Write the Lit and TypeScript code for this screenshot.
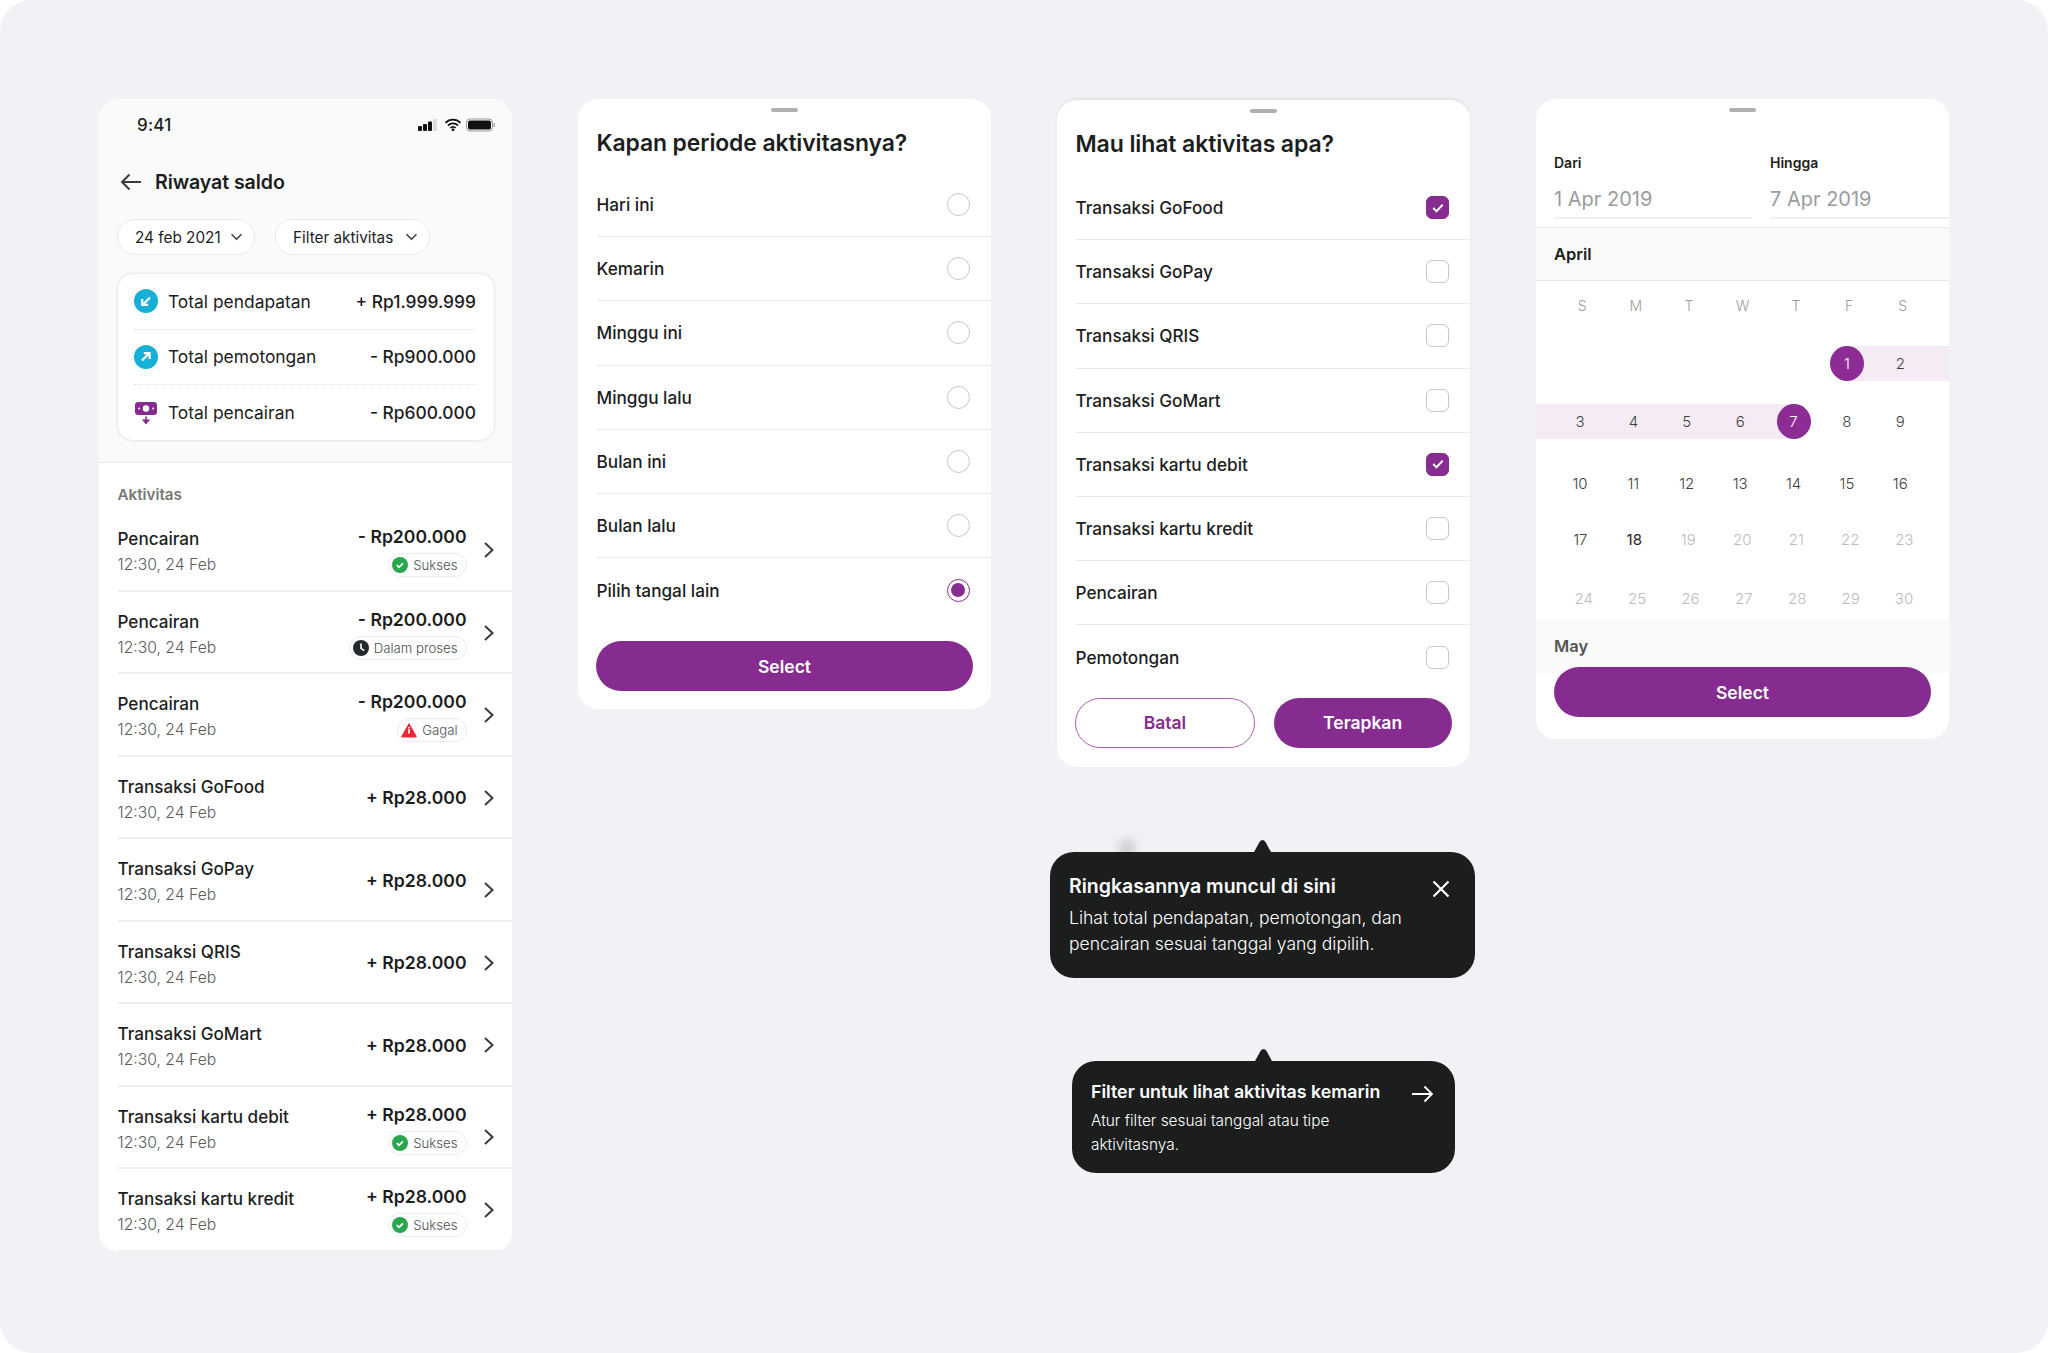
import { LitElement, css, html, svg } from "lit";
import { customElement } from "lit/decorators.js";

const chevron = html`<svg class="chev" width="12" height="18" viewBox="0 0 12 18" fill="none" stroke="#3a3c3c" stroke-width="2"><path d="M2 2l7.5 7L2 16" /></svg>`;
const caret = html`<svg width="13" height="8" viewBox="0 0 13 8" fill="none" stroke="#3a3c3c" stroke-width="1.5"><path d="M1.5 1.2l5 5 5-5" /></svg>`;

const okIcon = svg`<circle cx="8" cy="8" r="8" fill="#2aa64f" /><path d="M4.8 8.2l2.2 2.1 4-4" fill="none" stroke="#fff" stroke-width="1.7" />`;
const clockIcon = svg`<circle cx="8" cy="8" r="8" fill="#25282a" /><path d="M8 3.4v5l3.2 2.2" fill="none" stroke="#fff" stroke-width="1.6" />`;
const failIcon = svg`<path d="M8 .8l7.6 13.4a.8.8 0 0 1-.7 1.2H1.1a.8.8 0 0 1-.7-1.2z" fill="#ee2737" /><rect x="7.2" y="7" width="1.6" height="4.6" fill="#fff" /><rect x="7.2" y="5" width="1.6" height="1.4" fill="#fff" />`;

interface Activity {
  title: string;
  amount: string;
  status?: "ok" | "wait" | "fail";
  low?: boolean;
}

const activities: Activity[] = [
  { title: "Pencairan", amount: "- Rp200.000", status: "ok" },
  { title: "Pencairan", amount: "- Rp200.000", status: "wait" },
  { title: "Pencairan", amount: "- Rp200.000", status: "fail" },
  { title: "Transaksi GoFood", amount: "+ Rp28.000" },
  { title: "Transaksi GoPay", amount: "+ Rp28.000", low: true },
  { title: "Transaksi QRIS", amount: "+ Rp28.000" },
  { title: "Transaksi GoMart", amount: "+ Rp28.000" },
  { title: "Transaksi kartu debit", amount: "+ Rp28.000", status: "ok", low: true },
  { title: "Transaksi kartu kredit", amount: "+ Rp28.000", status: "ok" },
];

const statusInfo = {
  ok: { label: "Sukses", icon: okIcon },
  wait: { label: "Dalam proses", icon: clockIcon },
  fail: { label: "Gagal", icon: failIcon },
};

const periods = ["Hari ini", "Kemarin", "Minggu ini", "Minggu lalu", "Bulan ini", "Bulan lalu", "Pilih tangal lain"];

const activityTypes = [
  { label: "Transaksi GoFood", on: true },
  { label: "Transaksi GoPay", on: false },
  { label: "Transaksi QRIS", on: false },
  { label: "Transaksi GoMart", on: false },
  { label: "Transaksi kartu debit", on: true },
  { label: "Transaksi kartu kredit", on: false },
  { label: "Pencairan", on: false },
  { label: "Pemotongan", on: false },
];

@customElement("app-root")
export class AppRoot extends LitElement {
  static styles = css`
    :host {
      display: block;
      background: #fff;
      font-family: Inter, "Liberation Sans", sans-serif;
      color: #1c1e1e;
    }
    .page {
      box-sizing: border-box;
      height: 1353px;
      padding: 99px;
      background: #f0f2f6;
      border-radius: 32px;
      display: grid;
      grid-template-columns: repeat(4, 413px);
      column-gap: 66px;
      align-items: start;
    }
    .card {
      background: #fff;
      border-radius: 20px;
      overflow: hidden;
    }
    .handle {
      width: 27px;
      height: 4px;
      border-radius: 2px;
      background: #aeb0b2;
      margin: 9px auto 0;
    }
    .btn {
      display: flex;
      align-items: center;
      justify-content: center;
      box-sizing: border-box;
      height: 50px;
      border-radius: 25px;
      background: #862b8f;
      color: #fff;
      font-size: 17.5px;
      font-weight: 600;
    }
    .btn.ghost {
      background: #fff;
      color: #862b8f;
      border: 1.5px solid #a860ae;
    }

    /* saldo card */
    .saldo {
      height: 1153px;
    }
    .saldo-top {
      height: 363px;
      background: #fafafa;
      border-bottom: 1px solid #e8e9ea;
      box-sizing: content-box;
    }
    .status {
      display: flex;
      align-items: center;
      justify-content: space-between;
      height: 52px;
      padding: 0 16px 0 38px;
    }
    .time {
      font-size: 17px;
      font-weight: 500;
      letter-spacing: 0.2px;
    }
    .nav {
      display: flex;
      align-items: center;
      gap: 13px;
      height: 32px;
      margin-top: 15px;
      padding-left: 21px;
    }
    .nav h1 {
      margin: 0;
      font-size: 19.6px;
      font-weight: 600;
      letter-spacing: -0.1px;
    }
    .chips {
      display: flex;
      gap: 20px;
      margin-top: 21px;
      padding-left: 18px;
    }
    .chip {
      display: flex;
      align-items: center;
      justify-content: space-between;
      box-sizing: border-box;
      height: 36px;
      padding: 0 11px 0 17px;
      background: #fff;
      border: 1px solid #e8e9ea;
      border-radius: 18px;
      font-size: 15.3px;
      font-weight: 400;
    }
    .chip.date {
      width: 138px;
    }
    .chip.filter {
      width: 155px;
    }
    .summary {
      box-sizing: border-box;
      width: 378px;
      height: 168px;
      margin: 18px 0 0 18px;
      padding: 0 18px 0 16px;
      background: #fff;
      border: 1px solid #ebecee;
      border-radius: 16px;
      box-shadow: 0 0 3px rgba(0, 0, 0, 0.08);
    }
    .sum-row {
      display: flex;
      align-items: center;
      box-sizing: border-box;
      height: 55.6px;
      border-bottom: 1px dotted #dfe0e1;
      font-size: 17.4px;
    }
    .sum-row:last-child {
      border-bottom: none;
    }
    .sum-row svg {
      margin-right: 10px;
    }
    .sum-row span:last-child {
      margin-left: auto;
      font-weight: 500;
    }
    .list-label {
      padding: 22px 0 0 18.5px;
      height: 24px;
      font-size: 15.2px;
      font-weight: 600;
      color: #777;
    }
    .activity {
      display: flex;
      align-items: center;
      box-sizing: border-box;
      height: 82.5px;
      margin-left: 18.5px;
      padding: 6px 17px 0 0;
      border-bottom: 2px solid #eeeff0;
    }
    .a-left {
      flex: 1;
    }
    .a-title {
      font-size: 17.1px;
      font-weight: 500;
      line-height: 26px;
    }
    .a-sub {
      font-size: 15.7px;
      font-weight: 300;
      color: #5a5c5e;
      line-height: 26px;
    }
    .a-right {
      display: flex;
      flex-direction: column;
      align-items: flex-end;
      margin: -3px 16.5px 0 0;
    }
    .a-amount {
      font-size: 17.6px;
      font-weight: 600;
      line-height: 26px;
    }
    .a-status {
      display: flex;
      align-items: center;
      gap: 5px;
      box-sizing: border-box;
      height: 24px;
      margin-top: 3px;
      padding: 0 8px 0 3px;
      border: 1px solid #ebecee;
      border-radius: 12px;
      font-size: 13.2px;
      font-weight: 300;
      color: #4d4f51;
    }
    .low {
      margin-top: 19px;
    }

    /* sheets */
    .sheet-title {
      margin: 0;
      padding-left: 18.5px;
      font-weight: 600;
      line-height: 32px;
      letter-spacing: -0.1px;
    }
    .period {
      height: 610px;
    }
    .period .sheet-title {
      font-size: 22.9px;
      margin-top: 15px;
    }
    .type {
      height: 667px;
      margin-top: 1px;
      box-shadow: 0 -2px 3px rgba(0, 0, 0, 0.06);
    }
    .type .sheet-title {
      font-size: 23px;
      margin-top: 15px;
    }
    .rows {
      margin-top: 14px;
    }
    .type .rows {
      margin-top: 16px;
    }
    .option {
      display: flex;
      align-items: center;
      justify-content: space-between;
      box-sizing: border-box;
      height: 64.2px;
      margin-left: 18.5px;
      padding-right: 21px;
      border-bottom: 1px solid #e9eaeb;
      font-size: 17.2px;
      font-weight: 500;
    }
    .option:last-child {
      border-bottom: none;
    }
    .radio {
      box-sizing: border-box;
      width: 23px;
      height: 23px;
      border: 1.5px solid #c4c6c8;
      border-radius: 50%;
    }
    .radio.on {
      border-color: #862b8f;
      padding: 3px;
    }
    .radio.on::after {
      content: "";
      display: block;
      width: 14px;
      height: 14px;
      border-radius: 50%;
      background: #862b8f;
    }
    .check {
      display: flex;
      align-items: center;
      justify-content: center;
      box-sizing: border-box;
      width: 23px;
      height: 23px;
      border: 1.5px solid #c4c6c8;
      border-radius: 6px;
    }
    .check.on {
      background: #862b8f;
      border-color: #862b8f;
    }
    .period .btn {
      margin: 18.5px 18px 0;
      height: 50.5px;
    }
    .actions {
      display: flex;
      gap: 19px;
      margin: 8px 18.5px 0 18px;
    }
    .actions .btn {
      flex: 1;
    }

    /* tooltips */
    .third {
      display: flex;
      flex-direction: column;
    }
    .tip {
      position: relative;
      box-sizing: border-box;
      background: #1c1e1e;
      color: #fff;
      border-radius: 24px;
    }
    .tip::before {
      content: "";
      position: absolute;
      left: 50%;
      width: 18px;
      height: 14px;
      margin-left: -9px;
      top: -13px;
      background: #1c1e1e;
      clip-path: path("M0 14 L6 3 Q9 -1 12 3 L18 14 Z");
    }
    .tip-one {
      width: 425px;
      height: 126px;
      margin: 85px 0 0 -7px;
      padding: 20px 25px 0 19px;
    }
    .tip-two {
      width: 383px;
      height: 112px;
      margin: 83px 0 0 15px;
      padding: 19px 21px 0 19px;
    }
    .tip-head {
      display: flex;
      align-items: center;
      justify-content: space-between;
    }
    .tip-one .tip-head {
      font-size: 19.5px;
      font-weight: 600;
      line-height: 28px;
    }
    .tip-one .tip-head svg {
      margin-top: 5px;
    }
    .tip-one p {
      margin: 5px 0 0;
      font-size: 17.5px;
      font-weight: 300;
      line-height: 26px;
    }
    .tip-two .tip-head {
      font-size: 17.8px;
      font-weight: 600;
      line-height: 24px;
    }
    .tip-two .tip-head svg {
      margin-top: 3px;
    }
    .tip-two p {
      margin: 5px 0 0;
      font-size: 15.4px;
      font-weight: 300;
      line-height: 23.5px;
    }
    .smudge {
      position: absolute;
      left: 62px;
      top: -19px;
      width: 30px;
      height: 19px;
      overflow: hidden;
    }
    .smudge::after {
      content: "";
      position: absolute;
      left: 6px;
      top: 6px;
      width: 18px;
      height: 18px;
      border-radius: 50%;
      background: #cfd0d4;
      filter: blur(4px);
    }

    /* date sheet */
    .dates {
      height: 640px;
      position: relative;
    }
    .range-inputs {
      display: grid;
      grid-template-columns: 198px 1fr;
      column-gap: 18px;
      margin: 41px 0 0 18px;
    }
    .range-inputs label {
      display: block;
      font-size: 14px;
      font-weight: 600;
      line-height: 20px;
    }
    .range-inputs div div {
      margin-top: 12px;
      height: 32px;
      border-bottom: 2px solid #eeeff0;
      font-size: 20px;
      color: #9a9c9e;
      font-weight: 400;
      line-height: 28px;
    }
    .month {
      display: flex;
      align-items: center;
      height: 54px;
      padding: 0 0 0 18px;
      margin-top: 8px;
      background: #fafafa;
      border-top: 1px solid #e8e9ea;
      border-bottom: 1px solid #e8e9ea;
      box-sizing: border-box;
      font-size: 16.5px;
      font-weight: 600;
    }
    .week {
      display: grid;
      grid-template-columns: repeat(7, 53.4px);
      padding-left: 19.6px;
      align-items: center;
      text-align: center;
    }
    .week.names {
      height: 26px;
      margin-top: 11px;
      font-size: 14px;
      font-weight: 300;
      color: #9a9c9e;
    }
    .week.days {
      height: 35px;
      font-size: 15px;
      font-weight: 300;
      color: #3d3f41;
      padding-left: 17.3px;
    }
    .week.r1 {
      margin-top: 28px;
      background: linear-gradient(90deg, transparent 311px, #f5ebf5 311px);
    }
    .week.r2 {
      margin-top: 23px;
      background: linear-gradient(90deg, #f5ebf5 258px, transparent 258px);
    }
    .week.r3 {
      margin-top: 27px;
    }
    .week.r4 {
      margin-top: 21px;
      grid-template-columns: repeat(7, 54px);
    }
    .week.r5 {
      margin-top: 24px;
      padding-left: 21px;
    }
    .day.sel {
      justify-self: center;
      width: 34px;
      height: 35px;
      line-height: 35px;
      border-radius: 50%;
      background: #8c2c94;
      color: #fff;
    }
    .day.strong {
      color: #1c1e1e;
      font-weight: 400;
    }
    .day.off {
      color: #b9bbbd;
    }
    .month.next {
      height: 53px;
      margin-top: 4px;
      border: none;
      color: #555;
      align-items: flex-start;
      padding: 16px 0 0 18px;
    }
    .dates .btn {
      margin: -6px 18px 0;
      position: relative;
      height: 50px;
    }
  `;

  private renderPeriodSheet() {
    return html`<section class="card period">
      <div class="handle"></div>
      <h2 class="sheet-title">Kapan periode aktivitasnya?</h2>
      <div class="rows">
        ${periods.map(
          (p, i) => html`<div class="option">
            <span>${p}</span>
            <span class="radio ${i === periods.length - 1 ? "on" : ""}"></span>
          </div>`,
        )}
      </div>
      <div class="btn">Select</div>
    </section>`;
  }

  private renderTypeSheet() {
    return html`<section class="card type">
      <div class="handle"></div>
      <h2 class="sheet-title">Mau lihat aktivitas apa?</h2>
      <div class="rows">
        ${activityTypes.map(
          t => html`<div class="option">
            <span>${t.label}</span>
            <span class="check ${t.on ? "on" : ""}">
              ${t.on
                ? html`<svg width="12" height="10" viewBox="0 0 12 10" fill="none" stroke="#fff" stroke-width="2"><path d="M1.2 5l3.3 3.2 6.2-6.6" /></svg>`
                : ""}
            </span>
          </div>`,
        )}
      </div>
      <div class="actions">
        <div class="btn ghost">Batal</div>
        <div class="btn">Terapkan</div>
      </div>
    </section>`;
  }

  private renderDateSheet() {
    const days = [
      { cls: "r1", cells: ["", "", "", "", "", "1", "2"] },
      { cls: "r2", cells: ["3", "4", "5", "6", "7", "8", "9"] },
      { cls: "r3", cells: ["10", "11", "12", "13", "14", "15", "16"] },
      { cls: "r4", cells: ["17", "18", "19", "20", "21", "22", "23"] },
      { cls: "r5", cells: ["24", "25", "26", "27", "28", "29", "30"] },
    ];
    const dayClass = (d: string) => {
      const n = Number(d);
      if (n === 1 || n === 7) return "sel";
      if (n === 18) return "strong";
      return n > 18 ? "off" : "";
    };
    return html`<section class="card dates">
      <div class="handle"></div>
      <div class="range-inputs">
        <div><label>Dari</label><div>1 Apr 2019</div></div>
        <div><label>Hingga</label><div>7 Apr 2019</div></div>
      </div>
      <div class="month">April</div>
      <div class="week names">${["S", "M", "T", "W", "T", "F", "S"].map(n => html`<span>${n}</span>`)}</div>
      ${days.map(
        w => html`<div class="week days ${w.cls}">
          ${w.cells.map(d => html`<span class="day ${dayClass(d)}">${d}</span>`)}
        </div>`,
      )}
      <div class="month next">May</div>
      <div class="btn">Select</div>
    </section>`;
  }

  private renderSaldo() {
    return html`<section class="card saldo">
      <div class="saldo-top">
        <div class="status">
          <span class="time">9:41</span>
          <svg width="78" height="14" viewBox="0 0 78 14">
            <rect x="0" y="8" width="4" height="5" rx="1" fill="#111" />
            <rect x="5" y="6" width="4" height="7" rx="1" fill="#111" />
            <rect x="10" y="3.5" width="4" height="9.5" rx="1" fill="#111" />
            <rect x="15" y="1" width="4" height="12" rx="1" fill="#ddd" />
            <path d="M27.5 4.8a10.6 10.6 0 0 1 15 0M30 7.5a7 7 0 0 1 10 0M32.4 10a3.4 3.4 0 0 1 5.2 0" fill="none" stroke="#111" stroke-width="1.8" />
            <circle cx="35" cy="11.8" r="1.4" fill="#111" />
            <rect x="48.5" y="1" width="26" height="12" rx="3.5" fill="none" stroke="#999" />
            <rect x="50" y="2.5" width="23" height="9" rx="2" fill="#111" />
            <rect x="75.5" y="5" width="1.2" height="4" rx=".6" fill="#999" />
          </svg>
        </div>
        <div class="nav">
          <svg width="22" height="18" viewBox="0 0 22 18" fill="none" stroke="#3a3c3c" stroke-width="2"><path d="M21 9H2M9.5 1.5L2 9l7.5 7.5" /></svg>
          <h1>Riwayat saldo</h1>
        </div>
        <div class="chips">
          <div class="chip date"><span>24 feb 2021</span>${caret}</div>
          <div class="chip filter"><span>Filter aktivitas</span>${caret}</div>
        </div>
        <div class="summary">
          <div class="sum-row">
            <svg width="24" height="24" viewBox="0 0 24 24"><circle cx="12" cy="12" r="12" fill="#16afd6" /><path d="M16 8.5l-7 7M8.2 10v5.8H14" fill="none" stroke="#fff" stroke-width="2.2" /></svg>
            <span>Total pendapatan</span><span>+ Rp1.999.999</span>
          </div>
          <div class="sum-row">
            <svg width="24" height="24" viewBox="0 0 24 24"><circle cx="12" cy="12" r="12" fill="#16afd6" /><path d="M8 15.5l7-7M9.8 8.2h5.8V14" fill="none" stroke="#fff" stroke-width="2.2" /></svg>
            <span>Total pemotongan</span><span>- Rp900.000</span>
          </div>
          <div class="sum-row">
            <svg width="24" height="24" viewBox="0 0 24 24"><rect x="1" y="1" width="22" height="13" rx="3" fill="#862b8f" /><circle cx="12" cy="7.5" r="3.2" fill="#fff" /><circle cx="5" cy="7.5" r="1" fill="#fff" /><circle cx="19" cy="7.5" r="1" fill="#fff" /><path d="M12 15.5v6M9.5 19.2l2.5 3 2.5-3z" stroke="#862b8f" stroke-width="1.6" fill="#862b8f" /></svg>
            <span>Total pencairan</span><span>- Rp600.000</span>
          </div>
        </div>
      </div>
      <div class="list-label">Aktivitas</div>
      ${activities.map(a => {
        const st = a.status ? statusInfo[a.status] : undefined;
        return html`<div class="activity">
          <div class="a-left">
            <div class="a-title">${a.title}</div>
            <div class="a-sub">12:30, 24 Feb</div>
          </div>
          <div class="a-right">
            <div class="a-amount">${a.amount}</div>
            ${st
              ? html`<div class="a-status"><svg width="16" height="16" viewBox="0 0 16 16">${st.icon}</svg><span>${st.label}</span></div>`
              : ""}
          </div>
          <span class=${a.low ? "low" : ""}>${chevron}</span>
        </div>`;
      })}
    </section>`;
  }

  render() {
    return html`<div class="page">
      ${this.renderSaldo()} ${this.renderPeriodSheet()}
      <div class="third">
        ${this.renderTypeSheet()}
        <div class="tip tip-one">
          <span class="smudge"></span>
          <div class="tip-head">
            <span>Ringkasannya muncul di sini</span>
            <svg width="18" height="18" viewBox="0 0 18 18" fill="none" stroke="#fff" stroke-width="2.2"><path d="M1.5 1.5l15 15M16.5 1.5l-15 15" /></svg>
          </div>
          <p>Lihat total pendapatan, pemotongan, dan<br />pencairan sesuai tanggal yang dipilih.</p>
        </div>
        <div class="tip tip-two">
          <div class="tip-head">
            <span>Filter untuk lihat aktivitas kemarin</span>
            <svg width="22" height="18" viewBox="0 0 22 18" fill="none" stroke="#fff" stroke-width="1.8"><path d="M0 9h20M12.5 1.5L20 9l-7.5 7.5" /></svg>
          </div>
          <p>Atur filter sesuai tanggal atau tipe<br />aktivitasnya.</p>
        </div>
      </div>
      ${this.renderDateSheet()}
    </div>`;
  }
}
